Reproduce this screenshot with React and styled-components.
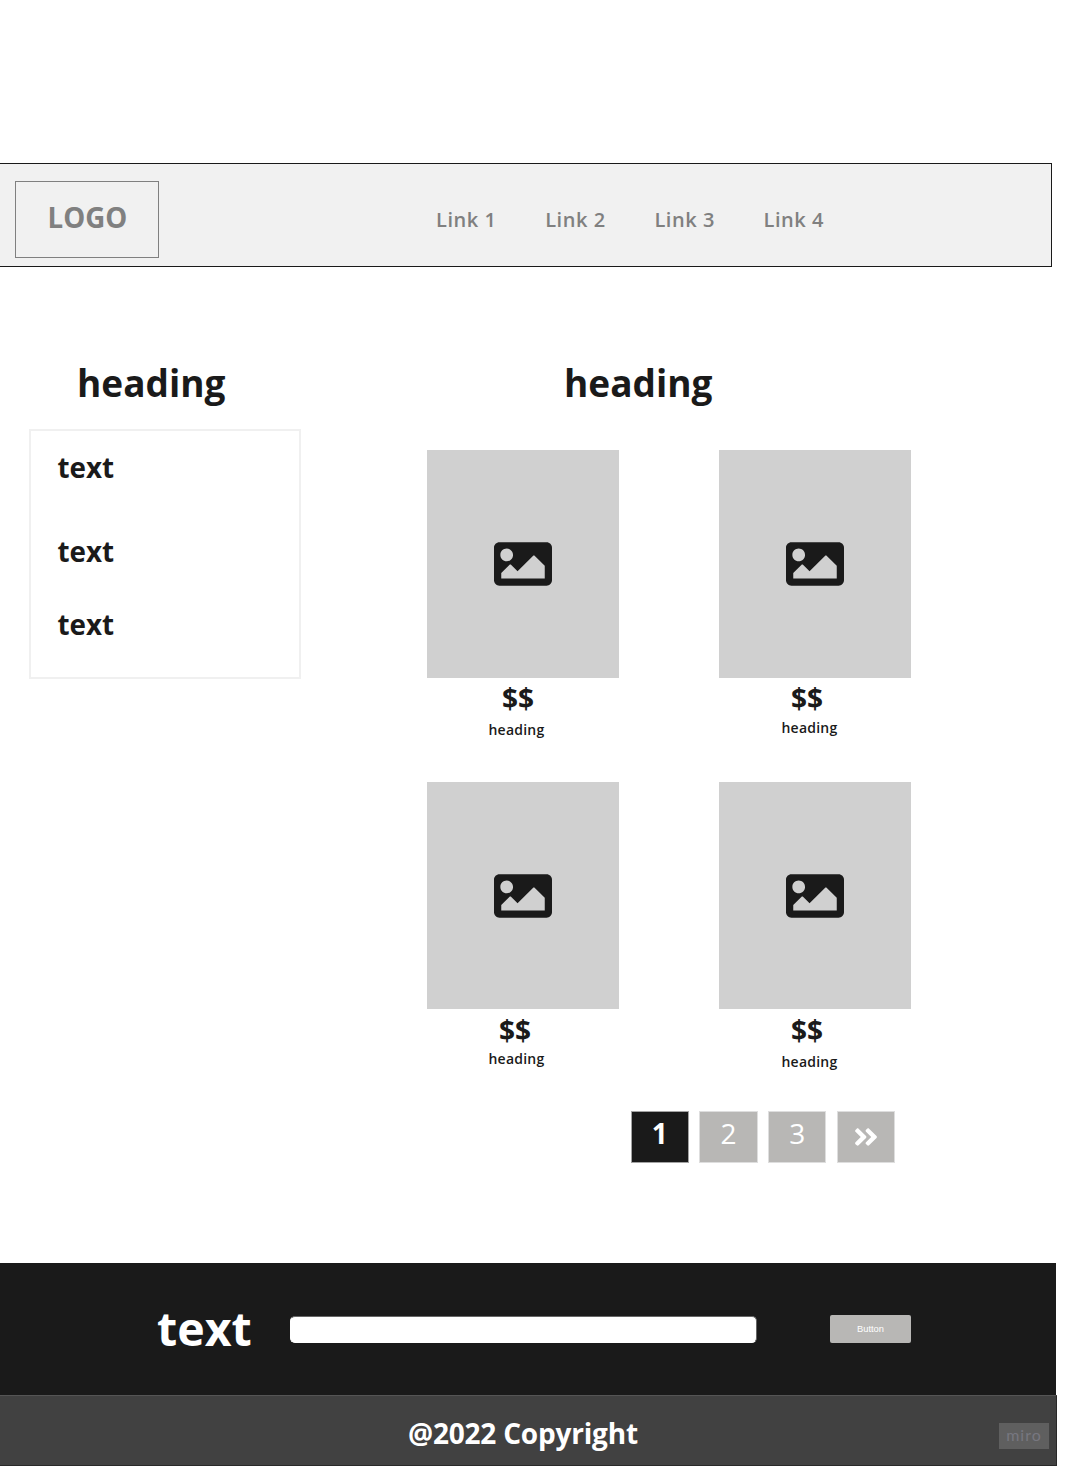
import React from "react";
import styled, { createGlobalStyle } from "styled-components";
import { FaImage, FaAngleDoubleRight } from "react-icons/fa";

const GlobalStyle = createGlobalStyle`
  * { box-sizing: border-box; }
  body {
    margin: 0;
    background: #fff;
    color: #1a1a1a;
    font-family: "Open Sans", "Noto Sans", sans-serif;
  }
  h1, h2, h3, p { margin: 0; }
`;

const Page = styled.div`
  width: 1065px;
  height: 1466px;
  padding-top: 163px;
  display: flex;
  flex-direction: column;
  overflow: hidden;
`;

const Header = styled.header`
  width: 1052px;
  height: 104px;
  display: flex;
  align-items: flex-start;
  background: #f1f1f1;
  border: 1px solid #1a1a1a;
  border-left: 0;
  padding: 17px 0 0 15px;
`;

const Logo = styled.div`
  width: 144px;
  height: 77px;
  padding-left: 31.5px;
  border: 1px solid #808080;
  color: #808080;
  font-size: 27.7px;
  font-weight: 700;
  line-height: 70px;
`;

const Nav = styled.nav`
  display: grid;
  grid-template-columns: repeat(4, 109.2px);
  margin: 25px 0 0 277px;
`;

const NavLink = styled.a`
  color: #808080;
  font-size: 20px;
  font-weight: 600;
  letter-spacing: 0.55px;
  line-height: 28px;
  white-space: nowrap;
`;

const Main = styled.main`
  display: flex;
  height: 996px;
  padding-top: 92px;
`;

const Sidebar = styled.aside`
  width: 272px;
  margin-left: 29px;
`;

const SectionTitle = styled.h1`
  height: 49px;
  padding-left: ${(p) => p.$indent}px;
  font-size: 37px;
  font-weight: 700;
  line-height: 48px;
`;

const FilterBox = styled.div`
  height: 250px;
  margin-top: 21px;
  padding: 16px 0 0 26.5px;
  border: 2px solid #f0f0f0;
`;

const FilterItem = styled.p`
  height: 40px;
  margin-bottom: ${(p) => p.$gap || 0}px;
  font-size: 27.8px;
  font-weight: 700;
  line-height: 40px;
`;

const Catalog = styled.section`
  width: 484px;
  margin-left: 126px;
`;

const Products = styled.div`
  display: grid;
  grid-template-columns: 192px 192px;
  grid-template-rows: 332px 329px;
  column-gap: 100px;
  margin-top: 42px;
`;

const Product = styled.article`
  display: flex;
  flex-direction: column;
`;

const Thumbnail = styled.div`
  display: flex;
  align-items: center;
  justify-content: center;
  height: ${(p) => p.$height}px;
  flex: none;
  background: #d0d0d0;
  font-size: 58px;
`;

const Price = styled.p`
  height: ${(p) => p.$height}px;
  padding-left: ${(p) => p.$indent}px;
  font-size: 28px;
  font-weight: 700;
  line-height: ${(p) => p.$height}px;
`;

const ProductName = styled.h3`
  margin-top: ${(p) => p.$gap}px;
  padding-left: ${(p) => p.$indent}px;
  font-size: 14px;
  font-weight: 600;
  letter-spacing: 0.22px;
  line-height: 20px;
`;

const Pagination = styled.nav`
  display: flex;
  gap: 10.2px;
  padding-left: 203.6px;
`;

const PageButton = styled.button`
  width: 58.5px;
  height: 52px;
  display: flex;
  align-items: center;
  justify-content: center;
  padding: 0 0 8px;
  border: 1px solid ${(p) => (p.$active ? "#a3a3a3" : "#dedede")};
  background: ${(p) => (p.$active ? "#1a1a1a" : "#b8b7b5")};
  color: #fff;
  font-family: inherit;
  font-size: 28px;
  font-weight: ${(p) => (p.$active ? 700 : 400)};
  line-height: 38px;

  svg { margin-top: 8px; font-size: 28px; }
`;

const Newsletter = styled.section`
  width: 1056px;
  height: 132px;
  flex: none;
  display: flex;
  align-items: flex-start;
  padding: 33px 0 0 157px;
  background: #1a1a1a;
`;

const NewsletterTitle = styled.h2`
  width: 132.5px;
  color: #fff;
  font-size: 46.5px;
  font-weight: 700;
  line-height: 64px;
`;

const EmailField = styled.input`
  width: 467px;
  height: 27px;
  margin-top: 19.5px;
  padding: 0 8px;
  border: 1px solid #666;
  border-bottom-color: #fff;
  border-left-color: #fff;
  border-radius: 5px;
  background: #fff;
`;

const SubmitButton = styled.button`
  width: 81px;
  height: 28px;
  margin: 19px 0 0 73.5px;
  padding: 0;
  border: 0;
  border-radius: 2px;
  background: #b8b7b5;
  color: #fff;
  font-family: "Liberation Sans", Arial, sans-serif;
  font-size: 9.3px;
`;

const Footer = styled.footer`
  width: 1057px;
  height: 71px;
  flex: none;
  display: flex;
  align-items: flex-start;
  background: #414141;
  border: 1px solid #292929;
  border-top-color: #555;
  border-left: 0;
  padding-left: 408px;
`;

const Copyright = styled.p`
  width: 591px;
  padding-top: 17px;
  color: #fff;
  font-size: 28px;
  font-weight: 700;
  letter-spacing: -0.2px;
  line-height: 40px;
`;

const Badge = styled.div`
  width: 50px;
  height: 26px;
  margin-top: 27px;
  padding-bottom: 2px;
  display: flex;
  align-items: center;
  justify-content: center;
  background: #5f5f5f;
  color: #777780;
  font-family: Lato, sans-serif;
  font-size: 16px;
  letter-spacing: 1px;
  line-height: 24px;
`;

const links = ["Link 1", "Link 2", "Link 3", "Link 4"];
const filters = [44, 33, 0];
const products = [
  { height: 228, price: 75, priceHeight: 40, name: 61.5, gap: 2 },
  { height: 228, price: 72, priceHeight: 40, name: 62.5, gap: 0 },
  { height: 227, price: 72, priceHeight: 42, name: 61.5, gap: -2 },
  { height: 227, price: 72, priceHeight: 42, name: 62.5, gap: 1 },
];

export default function App() {
  return (
    <Page>
      <GlobalStyle />
      <Header>
        <Logo>LOGO</Logo>
        <Nav>
          {links.map((label) => (
            <NavLink key={label}>{label}</NavLink>
          ))}
        </Nav>
      </Header>
      <Main>
        <Sidebar>
          <SectionTitle $indent={48}>heading</SectionTitle>
          <FilterBox>
            {filters.map((gap, i) => (
              <FilterItem key={i} $gap={gap}>text</FilterItem>
            ))}
          </FilterBox>
        </Sidebar>
        <Catalog>
          <SectionTitle $indent={137}>heading</SectionTitle>
          <Products>
            {products.map((item, i) => (
              <Product key={i}>
                <Thumbnail $height={item.height}><FaImage /></Thumbnail>
                <Price $indent={item.price} $height={item.priceHeight}>$$</Price>
                <ProductName $indent={item.name} $gap={item.gap}>heading</ProductName>
              </Product>
            ))}
          </Products>
          <Pagination>
            <PageButton $active>1</PageButton>
            <PageButton>2</PageButton>
            <PageButton>3</PageButton>
            <PageButton aria-label="Next"><FaAngleDoubleRight /></PageButton>
          </Pagination>
        </Catalog>
      </Main>
      <Newsletter>
        <NewsletterTitle>text</NewsletterTitle>
        <EmailField />
        <SubmitButton>Button</SubmitButton>
      </Newsletter>
      <Footer>
        <Copyright>@2022 Copyright</Copyright>
        <Badge>miro</Badge>
      </Footer>
    </Page>
  );
}
